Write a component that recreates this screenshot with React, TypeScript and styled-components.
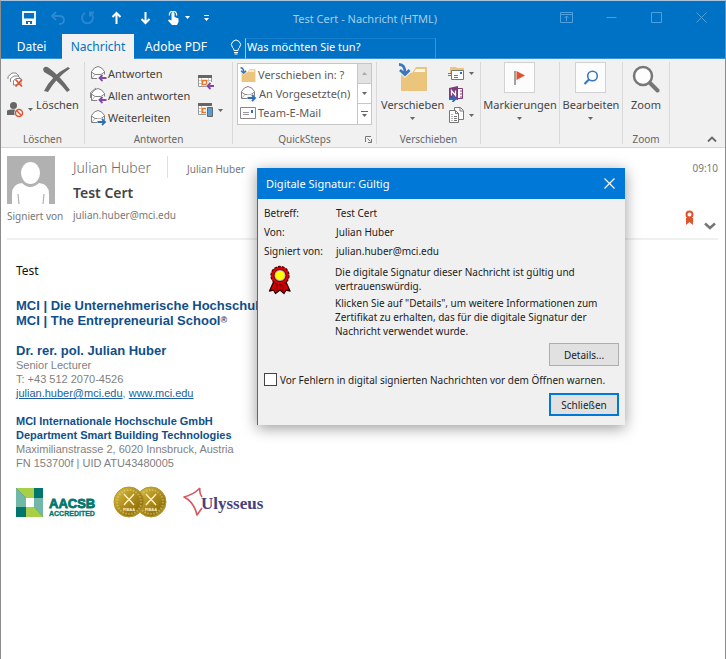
import React from 'react';
import styled, { createGlobalStyle } from 'styled-components';

const ui = '"Noto Sans", "Open Sans", sans-serif';
const arial = '"Liberation Sans", Arial, sans-serif';

const GlobalStyle = createGlobalStyle`
  * { box-sizing: border-box; }
  body { margin: 0; background: #fff; font-family: ${ui}; font-size: 12px; color: #444; }
  button, input { font-family: inherit; }
  svg { display: block; flex: none; }
`;

const Window = styled.div`
  position: relative;
  min-height: 100vh;
  display: flex;
  flex-direction: column;
  background: #fff;
  border: 1px solid #8c8c8c;
  border-top-color: #a9c4dc;
  border-bottom: 0;
`;

const Plain = styled.button`
  display: flex;
  align-items: center;
  padding: 0;
  border: 0;
  background: none;
  color: inherit;
  font-size: inherit;
  white-space: nowrap;
`;

const TitleBar = styled.header`
  display: grid;
  grid-template-columns: 1fr auto 1fr;
  align-items: center;
  height: 33px;
  padding: 0 17px 0 21px;
  background: #0072c6;
`;
const QuickAccess = styled.div`
  display: flex;
  align-items: center;
  gap: 14px;
`;
const Title = styled.h1`
  margin: 0;
  padding-top: 2px;
  font-size: 11px;
  font-weight: 400;
  color: #a3cdec;
`;
const WindowButtons = styled.div`
  display: flex;
  align-items: center;
  justify-content: flex-end;
  gap: 32px;
`;

const TabBar = styled.nav`
  display: flex;
  align-items: stretch;
  height: 25px;
  background: #0072c6;
  box-shadow: inset 0 -1px #3a93d6;
`;
const Tab = styled(Plain)<{ $active?: boolean; $width: number }>`
  flex: 0 0 ${p => p.$width}px;
  justify-content: center;
  color: ${p => (p.$active ? '#0072c6' : '#fff')};
  background: ${p => (p.$active ? '#f1f1f1' : 'transparent')};
`;
const TellMe = styled.label`
  display: flex;
  align-items: center;
  gap: 3px;
  flex: 0 1 206px;
  margin-left: 12px;
`;
const TellInput = styled.input`
  flex: 1;
  min-width: 0;
  height: 21px;
  margin-top: 3px;
  padding: 0 0 3px 1px;
  border: 1px solid #3a93d6;
  border-left-color: #9accf0;
  border-top-color: #1680cf;
  background: transparent;
  color: #fff;
  font-size: 11px;
  &::placeholder { color: #fff; opacity: 1; }
`;

const Ribbon = styled.section`
  display: flex;
  height: 89px;
  padding-top: 3px;
  background: #f1f1f1;
  border-bottom: 1px solid #d5d5d5;
  font-size: 11px;
`;
const Group = styled.div<{ $width: number }>`
  display: flex;
  flex-direction: column;
  flex: 0 0 ${p => p.$width}px;
  margin-bottom: 3px;
  border-right: 1px solid #d9d9d9;
`;
const GroupBody = styled.div<{ $pad?: string; $gap?: number; $center?: boolean }>`
  display: flex;
  flex: 1;
  justify-content: ${p => (p.$center ? 'center' : 'flex-start')};
  gap: ${p => p.$gap || 0}px;
  padding: ${p => p.$pad || 0};
`;
const GroupLabel = styled.div`
  display: flex;
  justify-content: center;
  align-items: center;
  position: relative;
  height: 10px;
  font-size: 10px;
  color: #666;
  & > svg { position: absolute; right: 4px; top: 2px; }
`;
const Stack = styled.div<{ $gap?: number; $pad?: number }>`
  display: flex;
  flex-direction: column;
  gap: ${p => p.$gap || 0}px;
  padding-top: ${p => p.$pad || 0}px;
`;
const Big = styled(Plain)<{ $top?: number }>`
  flex-direction: column;
  align-self: flex-start;
  padding-top: ${p => p.$top || 0}px;
`;
const BigText = styled.span`
  line-height: 16px;
  margin: 4px 0;
`;
const RowButton = styled(Plain)`
  height: 22px;
  gap: 1px;
`;
const SmallIcon = styled(Plain)`
  gap: 4px;
`;
const Tile = styled.span`
  display: grid;
  place-items: center;
  width: 31px;
  height: 31px;
  background: #fcfcfc;
  border: 1px solid #d2d2d2;
`;
const Gallery = styled.div`
  display: flex;
  width: 135px;
  height: 62px;
  border: 1px solid #c6c6c6;
  background: #fff;
`;
const GalleryList = styled.div`
  flex: 1;
  padding: 1px 0 0 2px;
`;
const GalleryItem = styled(Plain)`
  height: 19px;
  gap: 2px;
  color: #5a5a5a;
`;
const Scroller = styled.div`
  display: grid;
  grid-template-rows: repeat(3, 1fr);
  width: 14px;
  border-left: 1px solid #c6c6c6;
`;
const ScrollButton = styled.button<{ $off?: boolean }>`
  display: grid;
  place-items: center;
  padding: 0;
  border: 0;
  border-bottom: 1px solid #c6c6c6;
  background: ${p => (p.$off ? '#e3e3e3' : '#fff')};
  &:last-child { border-bottom: 0; }
`;
const Collapse = styled(Plain)`
  margin: auto 8px 5px auto;
`;

const MailHead = styled.section`
  display: grid;
  grid-template-columns: 48px 1fr auto;
  column-gap: 18px;
  margin: 0 7px 0 6px;
  padding-top: 8px;
  height: 92px;
  border-bottom: 2px solid #f0f0f0;
  font-size: 11px;
  color: #777;
`;
const Sender = styled.div`
  display: flex;
  align-items: center;
  height: 22px;
`;
const SenderName = styled.span`
  width: 94px;
  font-size: 14px;
  font-weight: 300;
  white-space: nowrap;
  color: #6a6a6a;
`;
const Recipient = styled.span`
  align-self: stretch;
  display: flex;
  align-items: center;
  padding: 3px 0 0 19px;
  border-left: 1px solid #e0e0e0;
  font-size: 10px;
`;
const Subject = styled.h2`
  margin: 5px 0 0;
  font-size: 14px;
  line-height: 20px;
  font-weight: 600;
  color: #444;
`;
const Signed = styled.div`
  font-size: 10px;
  line-height: 14px;
  margin-top: 5px;
  white-space: nowrap;
`;
const HeadEnd = styled.div`
  display: flex;
  flex-direction: column;
  align-items: flex-end;
  gap: 35px;
  padding-top: 5px;
  font-size: 10px;
  line-height: 14px;
`;
const Marks = styled.div`
  display: flex;
  gap: 10px;
  padding-right: 2px;
`;

const Mail = styled.main`
  padding: 21px 15px;
  color: #7f7f7f;
  font-family: ${arial};
  font-size: 11px;
  line-height: 14px;
`;
const Greeting = styled.p`
  margin: 0 0 17px;
  font-family: ${ui};
  font-size: 12px;
  line-height: 20px;
  color: #111;
`;
const Block = styled.p<{ $after: number }>`
  margin: 0 0 ${p => p.$after}px;
`;
const Strong = styled.strong<{ $large?: boolean }>`
  display: block;
  color: #0f4f8a;
  font-size: ${p => (p.$large ? 13 : 11)}px;
  line-height: ${p => (p.$large ? 15 : 14)}px;
`;
const Registered = styled.sup`
  font-size: 9px;
  line-height: 0;
  vertical-align: 2px;
`;
const Link = styled.a`
  color: #1d5f9c;
`;
const Logos = styled.div`
  display: flex;
  align-items: center;
  gap: 15px;
`;

const Dialog = styled.section`
  position: absolute;
  left: 256px;
  top: 167px;
  width: 368px;
  background: #f0f0f0;
  border-left: 1px solid #1979ca;
  color: #1c1c1c;
  font-size: 10px;
  line-height: 14px;
  box-shadow: 0 3px 14px rgba(0, 0, 0, 0.4);
`;
const DialogTitle = styled.div`
  display: flex;
  align-items: center;
  justify-content: space-between;
  height: 31px;
  padding: 0 10px 0 8px;
  background: #0078d7;
  color: #fff;
`;
const DialogHeading = styled.h2`
  margin: 0;
  font-size: 11px;
  font-weight: 400;
`;
const DialogBody = styled.div`
  padding: 5px 6px 9px;
`;
const Facts = styled.dl`
  display: grid;
  grid-template-columns: 72px 1fr;
  margin: 0;
  line-height: 19px;
  dt, dd { margin: 0; }
`;
const Message = styled.div`
  display: grid;
  grid-template-columns: 71px 1fr;
  margin: 4px 0 2px;
  & > svg { margin-left: 4px; }
  p { margin: 0 0 3px; }
`;
const Action = styled.button<{ $primary?: boolean }>`
  display: block;
  width: 70px;
  height: 23px;
  margin-left: auto;
  padding: 0;
  border: ${p => (p.$primary ? '2px solid #0078d7' : '1px solid #adadad')};
  background: #e1e1e1;
  color: #1c1c1c;
  font-size: 10px;
`;
const Check = styled.label`
  display: flex;
  align-items: center;
  gap: 3px;
  height: 27px;
  white-space: nowrap;
`;
const Box = styled.input`
  appearance: none;
  width: 13px;
  height: 13px;
  margin: 0;
  border: 1px solid #444;
  background: #fff;
`;

const Down = ({ color = '#666' }: { color?: string }) => (
  <svg width="5" height="3" viewBox="0 0 5 3"><path d="M0 0h5L2.5 3z" fill={color} /></svg>
);

const Envelope = ({ kind }: { kind: 'reply' | 'all' | 'forward' }) => (
  <svg width="17" height="17" viewBox="0 0 17 17" fill="none">
    {kind === 'all' && <path d="M.5 11V5.500L6 1" stroke="#888" />}
    <path d="M1.500 6.500Q4 2 8 1.500q4 .5 6.500 5v7h-13z" fill="#fff" stroke="#808080" />
    <path d="M1.500 7L5 9.500h6L14.500 7" stroke="#808080" />
    <path d="M2 13l3-3.500" stroke="#b5b5b5" />
    {kind === 'forward' ? (
      <g><path d="M7 9.500h5l5 3V17H7z" fill="#f6f6f6" /><path d="M7.500 13H15M12 10l3 3-3 3" stroke="#2f6eb5" strokeWidth="1.800" /></g>
    ) : (
      <g><path d="M7 13l4-3.500h6V17H8z" fill="#f6f6f6" /><path d="M16.500 13H9.500M12.500 10l-3 3 3 3" stroke="#8048a8" strokeWidth="1.800" /></g>
    )}
  </svg>
);

const Folder = ({ size }: { size: number }) => (
  <svg width={size} height={size} viewBox="0 0 30 30">
    <path d="M3 28V10h11l4-6h11v24z" fill="#ecc57c" />
    <path d="M18 6h9v3H16z" fill="#fff8e8" />
    <path d="M1 1.500c4 0 6 2 6 9M2 7l5 4.500L11.500 7" fill="none" stroke="#f1f1f1" strokeWidth="5" />
    <path d="M1 1.500c4 0 6 2 6 9M2 7l5 4.500L11.500 7" fill="none" stroke="#3b77bc" strokeWidth="2.800" />
  </svg>
);

const Calendar = ({ phone }: { phone?: boolean }) => (
  <svg width="16" height="16" viewBox="0 0 16 16" fill="none">
    <path d="M.5 1.500h13v11H.5z" fill="#fff" stroke="#999" />
    <path d="M0 1h14v3H0z" fill="#666" />
    <path d="M3.500 4v8M10.500 4v8M1 9.500h12M1 6.500h12" stroke="#c8c8c8" />
    <path d="M4.500 6.500h4v4h-4z" fill="#fff" stroke="#e8752c" strokeWidth="1.500" />
    {phone ? (
      <g><path d="M8 4h8v12H8z" fill="#f1f1f1" /><path d="M9.500 5.500h5v9h-5z" fill="#5b9bd5" stroke="#666" /></g>
    ) : (
      <g><path d="M8 11l3-3h5v8H9z" fill="#f1f1f1" /><path d="M16 12H9.500M12.500 9l-3 3 3 3" stroke="#8048a8" strokeWidth="1.800" /></g>
    )}
  </svg>
);

const Rosette = () => (
  <svg width="24" height="30" viewBox="0 0 24 30" strokeLinejoin="round">
    <path d="M6 16L1.500 26l4-1 2 3.500L12 25l4 3.500 2-3.500 4 1-4.500-10z" fill="#d40000" stroke="#300" strokeWidth="1.300" />
    <path d="M9 20v6M12 19v6M15 20v6" stroke="#700" />
    <circle cx="12" cy="10.500" r="9" fill="#e00000" stroke="#500" strokeWidth="1.300" strokeDasharray="3 1" />
    <circle cx="12" cy="10.500" r="6" fill="#bdb4b4" stroke="#5c0000" />
    <circle cx="12" cy="10.500" r="4.500" fill="#ff0" />
  </svg>
);

const Aacsb = () => (
  <svg width="82" height="29" viewBox="0 0 82 29">
    <path d="M0 0h27v29H0z" fill="#00766c" />
    <path d="M0 0h18v10H10z" fill="#a8cf45" />
    <path d="M0 0l10 10v9H0z" fill="#72b8a8" />
    <path d="M18 10h9v19l-9-10z" fill="#72b8a8" />
    <path d="M10 19h8l9 10H10z" fill="#a8cf45" />
    <path d="M10 10h8v9h-8z" fill="#fff" />
    <text x="33" y="20" fontFamily="Liberation Sans" fontSize="13" fontWeight="700" fill="#00766c" stroke="#00766c" strokeWidth=".8">AACSB</text>
    <text x="33" y="28" fontFamily="Liberation Sans" fontSize="7" fontWeight="700" fill="#00766c" stroke="#00766c" strokeWidth=".3">ACCREDITED</text>
  </svg>
);

const Seal = ({ x }: { x: number }) => (
  <g transform={`translate(${x} 16)`}>
    <circle r="15" fill="url(#gold)" stroke="#b4952a" />
    <circle r="12" fill="none" stroke="#f2dd85" strokeWidth="2" strokeDasharray="1.500 1.500" opacity=".45" />
    <path d="M-5-8Q-1-3 0-3T5-8M-5 3Q-1-2 0-2T5 3" fill="none" stroke="#fff0b8" strokeWidth="1.400" />
    <text y="9" textAnchor="middle" fontFamily="Liberation Sans" fontSize="4" fontWeight="700" fill="#fff3c0">FIBAA</text>
  </g>
);

const Seals = () => (
  <svg width="55" height="32" viewBox="0 0 55 32">
    <defs>
      <linearGradient id="gold" x1="0" y1="0" x2="1" y2="1">
        <stop offset="0" stopColor="#dcc548" />
        <stop offset=".5" stopColor="#ad8b1c" />
        <stop offset=".75" stopColor="#93750f" />
        <stop offset="1" stopColor="#e0c95a" />
      </linearGradient>
    </defs>
    <Seal x={38} />
    <Seal x={16} />
  </svg>
);

const Ulysseus = () => (
  <svg width="84" height="30" viewBox="0 0 84 30">
    <path d="M17 1Q10 8 1 10q10 5 13 18l5-7M17 1q-1 5 2 9" fill="none" stroke="#d95560" strokeWidth="1.600" strokeLinejoin="round" />
    <text x="18" y="22" fontFamily="Liberation Serif" fontSize="17" fontWeight="700" fill="#46407c">Ulysseus</text>
  </svg>
);

export default function App() {
  return (
    <Window>
      <GlobalStyle />
      <TitleBar>
        <QuickAccess>
          <Plain aria-label="Speichern">
            <svg width="14" height="14" viewBox="0 0 14 14"><path d="M1 1h12v12H1z" fill="none" stroke="#fff" strokeWidth="1.800" /><path d="M1 7.500h12v5.500H1z" fill="#fff" /><path d="M4 10h6v3H8v-2H6v2H4z" fill="#0072c6" /></svg>
          </Plain>
          <Plain aria-label="Rückgängig">
            <svg width="16" height="14" viewBox="0 0 16 14" fill="none" stroke="#2e88d0" strokeWidth="1.800"><path d="M2 5h7q5 0 5 4t-5 4M6 1L2 5l4 4" /></svg>
          </Plain>
          <Plain aria-label="Wiederholen">
            <svg width="15" height="14" viewBox="0 0 15 14" fill="none" stroke="#2e88d0" strokeWidth="1.800"><path d="M5 2a5.500 5.500 0 1 0 5 0M14 1.500h-4v4" /></svg>
          </Plain>
          <Plain aria-label="Vorheriges Element">
            <svg width="15" height="14" viewBox="0 0 15 14" fill="none" stroke="#fff" strokeWidth="2"><path d="M7.500 13V2M3.500 6l4-4 4 4" /></svg>
          </Plain>
          <Plain aria-label="Nächstes Element">
            <svg width="15" height="14" viewBox="0 0 15 14" fill="none" stroke="#fff" strokeWidth="2"><path d="M7.500 1v11M3.500 8l4 4 4-4" /></svg>
          </Plain>
          <SmallIcon aria-label="Touch-/Mausmodus">
            <svg width="14" height="14" viewBox="0 0 14 14"><path d="M4.500 7V2.500a1.500 1.500 0 0 1 3 0V6l4 1.500V11L10 14H5L1 9.500l1-1 2.500 1z" fill="#fff" /><path d="M2.500 4.500a3.600 3.600 0 1 1 7 0" fill="none" stroke="#fff" strokeWidth="1.200" /></svg>
            <Down color="#fff" />
          </SmallIcon>
          <Plain aria-label="Schnellzugriff anpassen">
            <svg width="5" height="6" viewBox="0 0 5 6"><path d="M0 0h5v1H0zM0 3h5L2.500 6z" fill="#fff" /></svg>
          </Plain>
        </QuickAccess>
        <Title>Test Cert - Nachricht (HTML)</Title>
        <WindowButtons>
          <Plain aria-label="Menüband-Anzeigeoptionen">
            <svg width="13" height="11" viewBox="0 0 13 11" fill="none" stroke="#4fa0dd"><path d="M.5.5h12v10H.5zM.5 2.500h12M6.500 9V4M4.500 6l2-2 2 2" /></svg>
          </Plain>
          <Plain aria-label="Minimieren">
            <svg width="13" height="11" viewBox="0 0 13 11" fill="none" stroke="#4fa0dd"><path d="M1.500 5.500h10" /></svg>
          </Plain>
          <Plain aria-label="Maximieren">
            <svg width="13" height="11" viewBox="0 0 13 11" fill="none" stroke="#4fa0dd"><path d="M1.500.5h10v10h-10z" /></svg>
          </Plain>
          <Plain aria-label="Schließen">
            <svg width="13" height="11" viewBox="0 0 13 11" fill="none" stroke="#4fa0dd"><path d="M1.500.5l10 10M11.500.5l-10 10" /></svg>
          </Plain>
        </WindowButtons>
      </TitleBar>
      <TabBar>
        <Tab $width={61}>Datei</Tab>
        <Tab $width={72} $active>Nachricht</Tab>
        <Tab $width={84}>Adobe PDF</Tab>
        <TellMe>
          <svg width="12" height="16" viewBox="0 0 12 16" fill="none" stroke="#fff"><path d="M4 11.500Q4 9.500 2.500 8.500a4.500 4.500 0 1 1 7 0Q8 9.500 8 11.500zM4 13.500h4M4.500 15h3" /></svg>
          <TellInput type="text" aria-label="Was möchten Sie tun?" placeholder="Was möchten Sie tun?" />
        </TellMe>
      </TabBar>
      <Ribbon>
        <Group $width={84}>
          <GroupBody $pad="0 0 0 6px" $gap={3}>
            <Stack $gap={13} $pad={9}>
              <SmallIcon aria-label="Ignorieren">
                <svg width="17" height="17" viewBox="0 0 17 17" fill="none" stroke="#888"><path d="M1 8V5.500L5 2h4l3 3M3.500 11V7.500L7 5h4l3 3M6.500 14V9.500L9 7.500h5v6z" fill="#fff" /><path d="M8.500 8.500l6.500 7M15 8.500l-6.500 7" stroke="#e0532f" strokeWidth="1.800" /></svg>
              </SmallIcon>
              <SmallIcon aria-label="Junk-E-Mail">
                <svg width="17" height="17" viewBox="0 0 17 17"><circle cx="6.500" cy="4.500" r="3.500" fill="#666" /><path d="M0 14V9.500Q3 8 6.500 8.500q4 0 4 4V14z" fill="#666" /><circle cx="12" cy="12" r="4.800" fill="#f1f1f1" /><circle cx="12" cy="12" r="3.500" fill="#fff" stroke="#e0532f" strokeWidth="1.500" /><path d="M9.500 9.500l5 5" stroke="#e0532f" strokeWidth="1.500" /></svg>
                <Down />
              </SmallIcon>
            </Stack>
            <Big $top={3}>
              <svg width="30" height="28" viewBox="0 0 30 28" fill="#6a6a6a"><path d="M1 4Q3 0 7 3q11 8 21 22l-3 2Q14 13 2 7z" /><path d="M28 3.500Q15 12 6 27L2 26Q10 10 26 2z" /></svg>
              <BigText>Löschen</BigText>
            </Big>
          </GroupBody>
          <GroupLabel>Löschen</GroupLabel>
        </Group>
        <Group $width={148}>
          <GroupBody $pad="0 0 0 5px" $gap={8}>
            <Stack>
              <RowButton><Envelope kind="reply" />Antworten</RowButton>
              <RowButton><Envelope kind="all" />Allen antworten</RowButton>
              <RowButton><Envelope kind="forward" />Weiterleiten</RowButton>
            </Stack>
            <Stack $gap={12} $pad={12}>
              <SmallIcon aria-label="Besprechung"><Calendar /></SmallIcon>
              <SmallIcon aria-label="Weitere Antwortaktionen"><Calendar phone /><Down /></SmallIcon>
            </Stack>
          </GroupBody>
          <GroupLabel>Antworten</GroupLabel>
        </Group>
        <Group $width={144}>
          <GroupBody $pad="1px 0 0 4px">
            <Gallery>
              <GalleryList>
                <GalleryItem><Folder size={16} />Verschieben in: ?</GalleryItem>
                <GalleryItem><Envelope kind="forward" />An Vorgesetzte(n)</GalleryItem>
                <GalleryItem>
                  <svg width="16" height="12" viewBox="0 0 16 12"><path d="M.5.5h15v11H.5z" fill="#fff" stroke="#888" /><path d="M3 5.500h6M3 7.500h6" stroke="#999" /><path d="M11 3h2v3h-2z" fill="#2f6eb5" /></svg>
                  Team-E-Mail
                </GalleryItem>
              </GalleryList>
              <Scroller>
                <ScrollButton $off aria-label="Vorherige"><svg width="5" height="3" viewBox="0 0 5 3"><path d="M0 3h5L2.500 0z" fill="#aaa" /></svg></ScrollButton>
                <ScrollButton aria-label="Nächste"><Down /></ScrollButton>
                <ScrollButton aria-label="Mehr"><svg width="7" height="7" viewBox="0 0 7 7"><path d="M0 0h7v1H0zM1 3h5L3.500 6z" fill="#666" /></svg></ScrollButton>
              </Scroller>
            </Gallery>
          </GroupBody>
          <GroupLabel>
            QuickSteps
            <svg width="7" height="7" viewBox="0 0 7 7" fill="none" stroke="#777"><path d="M.5 6V.5H6M2.500 2.500l3 3M6.500 3v3.500H3" /></svg>
          </GroupLabel>
        </Group>
        <Group $width={104}>
          <GroupBody $pad="0 0 0 4px" $gap={4}>
            <Big $top={1}>
              <Folder size={30} />
              <BigText>Verschieben</BigText>
              <Down />
            </Big>
            <Stack $gap={5} $pad={4}>
              <SmallIcon aria-label="Regeln">
                <svg width="17" height="15" viewBox="0 0 17 15"><path d="M2 1h6l1 1h7v5H2z" fill="#ecc57c" /><path d="M3.500 4.500h12v9h-12z" fill="#fff" stroke="#777" /><path d="M0 7.500h3M0 9.500h3M6 9.500h4M6 11.500h4" stroke="#777" /><path d="M12 6h2v2h-2z" fill="#2f6eb5" /></svg>
                <Down />
              </SmallIcon>
              <SmallIcon aria-label="OneNote">
                <svg width="17" height="16" viewBox="0 0 17 16"><path d="M8 2.500h6.500v10H8" fill="#fff" stroke="#80397b" /><path d="M12 5h3M12 8h3M12 11h3" stroke="#80397b" /><path d="M1 2l9-2v14l-9-2z" fill="#80397b" /><path d="M3.500 9.500v-5l4 5v-5" fill="none" stroke="#fff" strokeWidth="1.300" /><path d="M1 13h6M4.500 10l3 3-3 3" fill="none" stroke="#2f6eb5" strokeWidth="1.800" /></svg>
              </SmallIcon>
              <SmallIcon aria-label="Aktionen">
                <svg width="17" height="17" viewBox="0 0 17 17" fill="#fff" stroke="#777"><path d="M6.500.5h6l3 3v9h-9z" /><path d="M1.500 3.500h6l3 3v9h-9z" /><path d="M7.500 3.500v3h3M3.500 7.500h1M6 9.500h3M3.500 9.500h1M3.500 11.500h1M6 11.500h3M3.500 13.500h1M6 13.500h3M12 1v3h3" fill="none" /></svg>
                <Down />
              </SmallIcon>
            </Stack>
          </GroupBody>
          <GroupLabel>Verschieben</GroupLabel>
        </Group>
        <Group $width={79}>
          <GroupBody $center>
            <Big>
              <Tile><svg width="16" height="16" viewBox="0 0 16 16"><path d="M3 1v14" stroke="#666" strokeWidth="1.200" /><path d="M4.500 1L13 5.500 4.500 10z" fill="#e0532f" /></svg></Tile>
              <BigText>Markierungen</BigText>
              <Down />
            </Big>
          </GroupBody>
        </Group>
        <Group $width={63}>
          <GroupBody $center>
            <Big>
              <Tile><svg width="16" height="16" viewBox="0 0 16 16" fill="none" stroke="#3b77bc"><circle cx="9.500" cy="6" r="4.800" strokeWidth="1.600" /><path d="M6 9.500L1.500 14" strokeWidth="2.200" /></svg></Tile>
              <BigText>Bearbeiten</BigText>
              <Down />
            </Big>
          </GroupBody>
        </Group>
        <Group $width={47}>
          <GroupBody $center>
            <Big $top={3}>
              <svg width="28" height="28" viewBox="0 0 28 28"><circle cx="11" cy="11" r="9" fill="#fdfdfd" stroke="#777" strokeWidth="2.500" /><path d="M18 18l7.500 7.500" stroke="#777" strokeWidth="4" strokeLinecap="round" /></svg>
              <BigText>Zoom</BigText>
            </Big>
          </GroupBody>
          <GroupLabel>Zoom</GroupLabel>
        </Group>
        <Collapse aria-label="Menüband reduzieren">
          <svg width="10" height="6" viewBox="0 0 10 6" fill="none" stroke="#666" strokeWidth="1.800"><path d="M1 5.500l4-4 4 4" /></svg>
        </Collapse>
      </Ribbon>

      <MailHead>
        <div>
          <svg width="48" height="48" viewBox="0 0 48 48"><path d="M0 0h48v48H0z" fill="#b1b1b1" /><ellipse cx="23.500" cy="17" rx="9.500" ry="11" fill="#fff" /><path d="M5 48V38q0-10 10-11 8 8 17 0 10 1 10 11v10z" fill="#fff" /><path d="M11 38l1 10M37 38l-1 10" stroke="#b1b1b1" strokeWidth="1.200" /></svg>
          <Signed>Signiert von</Signed>
        </div>
        <div>
          <Sender>
            <SenderName>Julian Huber</SenderName>
            <Recipient>Julian Huber</Recipient>
          </Sender>
          <Subject>Test Cert</Subject>
          <Signed>julian.huber@mci.edu</Signed>
        </div>
        <HeadEnd>
          <time>09:10</time>
          <Marks>
            <svg width="9" height="16" viewBox="0 0 9 16"><path d="M1 8h7v7l-3.500-3L1 15z" fill="#e0532f" /><circle cx="4.500" cy="4.500" r="3" fill="#fff" stroke="#e0532f" strokeWidth="2" /></svg>
            <Plain aria-label="Mehr anzeigen">
              <svg width="12" height="20" viewBox="0 0 12 20" fill="none" stroke="#777" strokeWidth="2.500"><path d="M1 13.500l5 4.500 5-4.500" /></svg>
            </Plain>
          </Marks>
        </HeadEnd>
      </MailHead>

      <Mail>
        <Greeting>Test</Greeting>
        <Block $after={15}>
          <Strong $large>MCI | Die Unternehmerische Hochschule</Strong>
          <Strong $large>MCI | The Entrepreneurial School<Registered>®</Registered></Strong>
        </Block>
        <Block $after={14}>
          <Strong $large>Dr. rer. pol. Julian Huber</Strong>
          Senior Lecturer<br />
          T: +43 512 2070-4526<br />
          <Link href="mailto:julian.huber@mci.edu">julian.huber@mci.edu</Link>, <Link href="#mci">www.mci.edu</Link>
        </Block>
        <Block $after={16}>
          <Strong>MCI Internationale Hochschule GmbH</Strong>
          <Strong>Department Smart Building Technologies</Strong>
          Maximilianstrasse 2, 6020 Innsbruck, Austria<br />
          FN 153700f | UID ATU43480005
        </Block>
        <Logos>
          <Aacsb />
          <Seals />
          <Ulysseus />
        </Logos>
      </Mail>

      <Dialog role="dialog" aria-labelledby="sig-title">
        <DialogTitle>
          <DialogHeading id="sig-title">Digitale Signatur: Gültig</DialogHeading>
          <Plain aria-label="Dialog schließen">
            <svg width="11" height="11" viewBox="0 0 11 11" stroke="#fff" strokeWidth="1.200"><path d="M.5.5l10 10M10.500.5l-10 10" /></svg>
          </Plain>
        </DialogTitle>
        <DialogBody>
          <Facts>
            <dt>Betreff:</dt><dd>Test Cert</dd>
            <dt>Von:</dt><dd>Julian Huber</dd>
            <dt>Signiert von:</dt><dd>julian.huber@mci.edu</dd>
          </Facts>
          <Message>
            <Rosette />
            <div>
              <p>Die digitale Signatur dieser Nachricht ist gültig und<br />vertrauenswürdig.</p>
              <p>Klicken Sie auf "Details", um weitere Informationen zum<br />Zertifikat zu erhalten, das für die digitale Signatur der<br />Nachricht verwendet wurde.</p>
            </div>
          </Message>
          <Action>Details...</Action>
          <Check><Box type="checkbox" />Vor Fehlern in digital signierten Nachrichten vor dem Öffnen warnen.</Check>
          <Action $primary>Schließen</Action>
        </DialogBody>
      </Dialog>
    </Window>
  );
}
